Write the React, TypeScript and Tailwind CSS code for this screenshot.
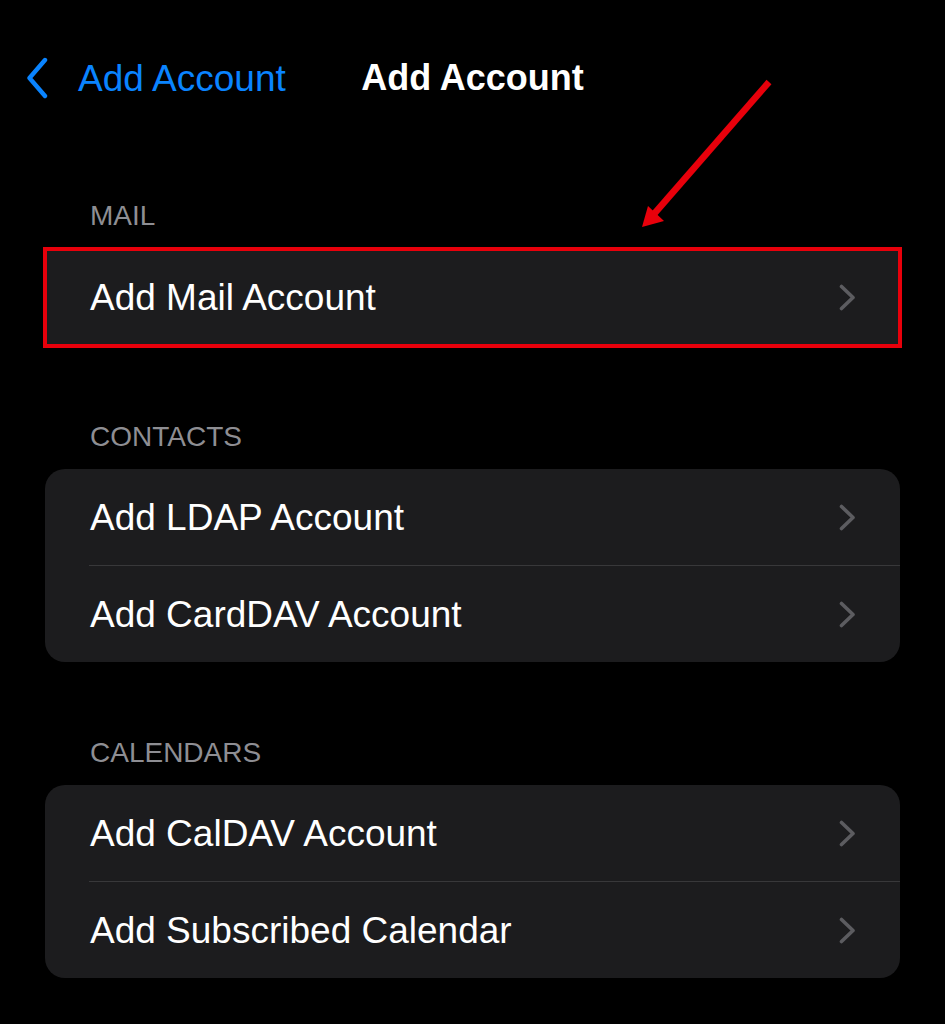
import { ReactNode } from "react";

type Row = { label: string };

const sections: { title: string; rows: Row[]; highlight?: boolean; gap: string }[] = [
  { title: "MAIL", rows: [{ label: "Add Mail Account" }], highlight: true, gap: "pt-[44px]" },
  {
    title: "CONTACTS",
    rows: [{ label: "Add LDAP Account" }, { label: "Add CardDAV Account" }],
    gap: "pt-[73px]",
  },
  {
    title: "CALENDARS",
    rows: [{ label: "Add CalDAV Account" }, { label: "Add Subscribed Calendar" }],
    gap: "pt-[75px]",
  },
];

function Chevron() {
  return (
    <svg width="17" height="27" viewBox="0 0 17 27" fill="none">
      <path
        d="M2.5 2.5 L14 13.5 L2.5 24.5"
        stroke="#5c5c60"
        strokeWidth="3.6"
        strokeLinecap="round"
        strokeLinejoin="round"
      />
    </svg>
  );
}

function ListRow({ label, boxed }: Row & { boxed?: boolean }) {
  return (
    <div
      className={
        boxed
          ? "flex h-[93px] items-center justify-between pl-[43px] pr-[42px]"
          : "flex h-[96px] items-center justify-between pl-[45px] pr-[44px]"
      }
    >
      <span className="text-[37px] leading-none text-white">{label}</span>
      <Chevron />
    </div>
  );
}

function Card({ children, highlight }: { children: ReactNode; highlight?: boolean }) {
  if (highlight) {
    return <div className="mx-[43px] border-4 border-[#e8000b] bg-[#1c1c1e]">{children}</div>;
  }
  return <div className="mx-[45px] overflow-hidden rounded-[20px] bg-[#1c1c1e]">{children}</div>;
}

export default function App() {
  return (
    <div className="relative min-h-[1024px] w-[945px] bg-black font-['Liberation_Sans',Arial,sans-serif]">
      <div className="grid h-[156px] grid-cols-[1fr_auto_1fr] items-start pt-[56px]">
        <div className="flex h-[44px] items-center pl-[26px]">
          <svg width="22" height="42" viewBox="0 0 22 42" fill="none">
            <path
              d="M19 3 L3.5 21 L19 39"
              stroke="#0a84ff"
              strokeWidth="4.4"
              strokeLinecap="round"
              strokeLinejoin="round"
            />
          </svg>
          <span className="ml-[30px] text-[37px] leading-none text-[#0a84ff]">Add Account</span>
        </div>
        <div className="flex h-[44px] items-center">
          <span className="text-[36px] font-bold leading-none text-white">Add Account</span>
        </div>
        <div />
      </div>

      {sections.map((section) => (
        <div key={section.title} className={section.gap}>
          <div className="h-[32px] pl-[90px] text-[28px] leading-[32px] text-[#8e8e93]">
            {section.title}
          </div>
          <div className={section.highlight ? "mt-[15px]" : "mt-[16px]"}>
            <Card highlight={section.highlight}>
              {section.rows.map((row, j) => (
                <div key={row.label}>
                  {j > 0 && <div className="ml-[44px] h-px bg-[#38383a]" />}
                  <ListRow label={row.label} boxed={section.highlight} />
                </div>
              ))}
            </Card>
          </div>
        </div>
      ))}

      <svg
        className="pointer-events-none absolute left-0 top-0"
        width="945"
        height="1024"
        viewBox="0 0 945 1024"
      >
        <line x1="769" y1="82" x2="654" y2="214" stroke="#e8000b" strokeWidth="6.5" />
        <polygon points="642,227 648,206 664,221" fill="#e8000b" />
      </svg>
    </div>
  );
}
